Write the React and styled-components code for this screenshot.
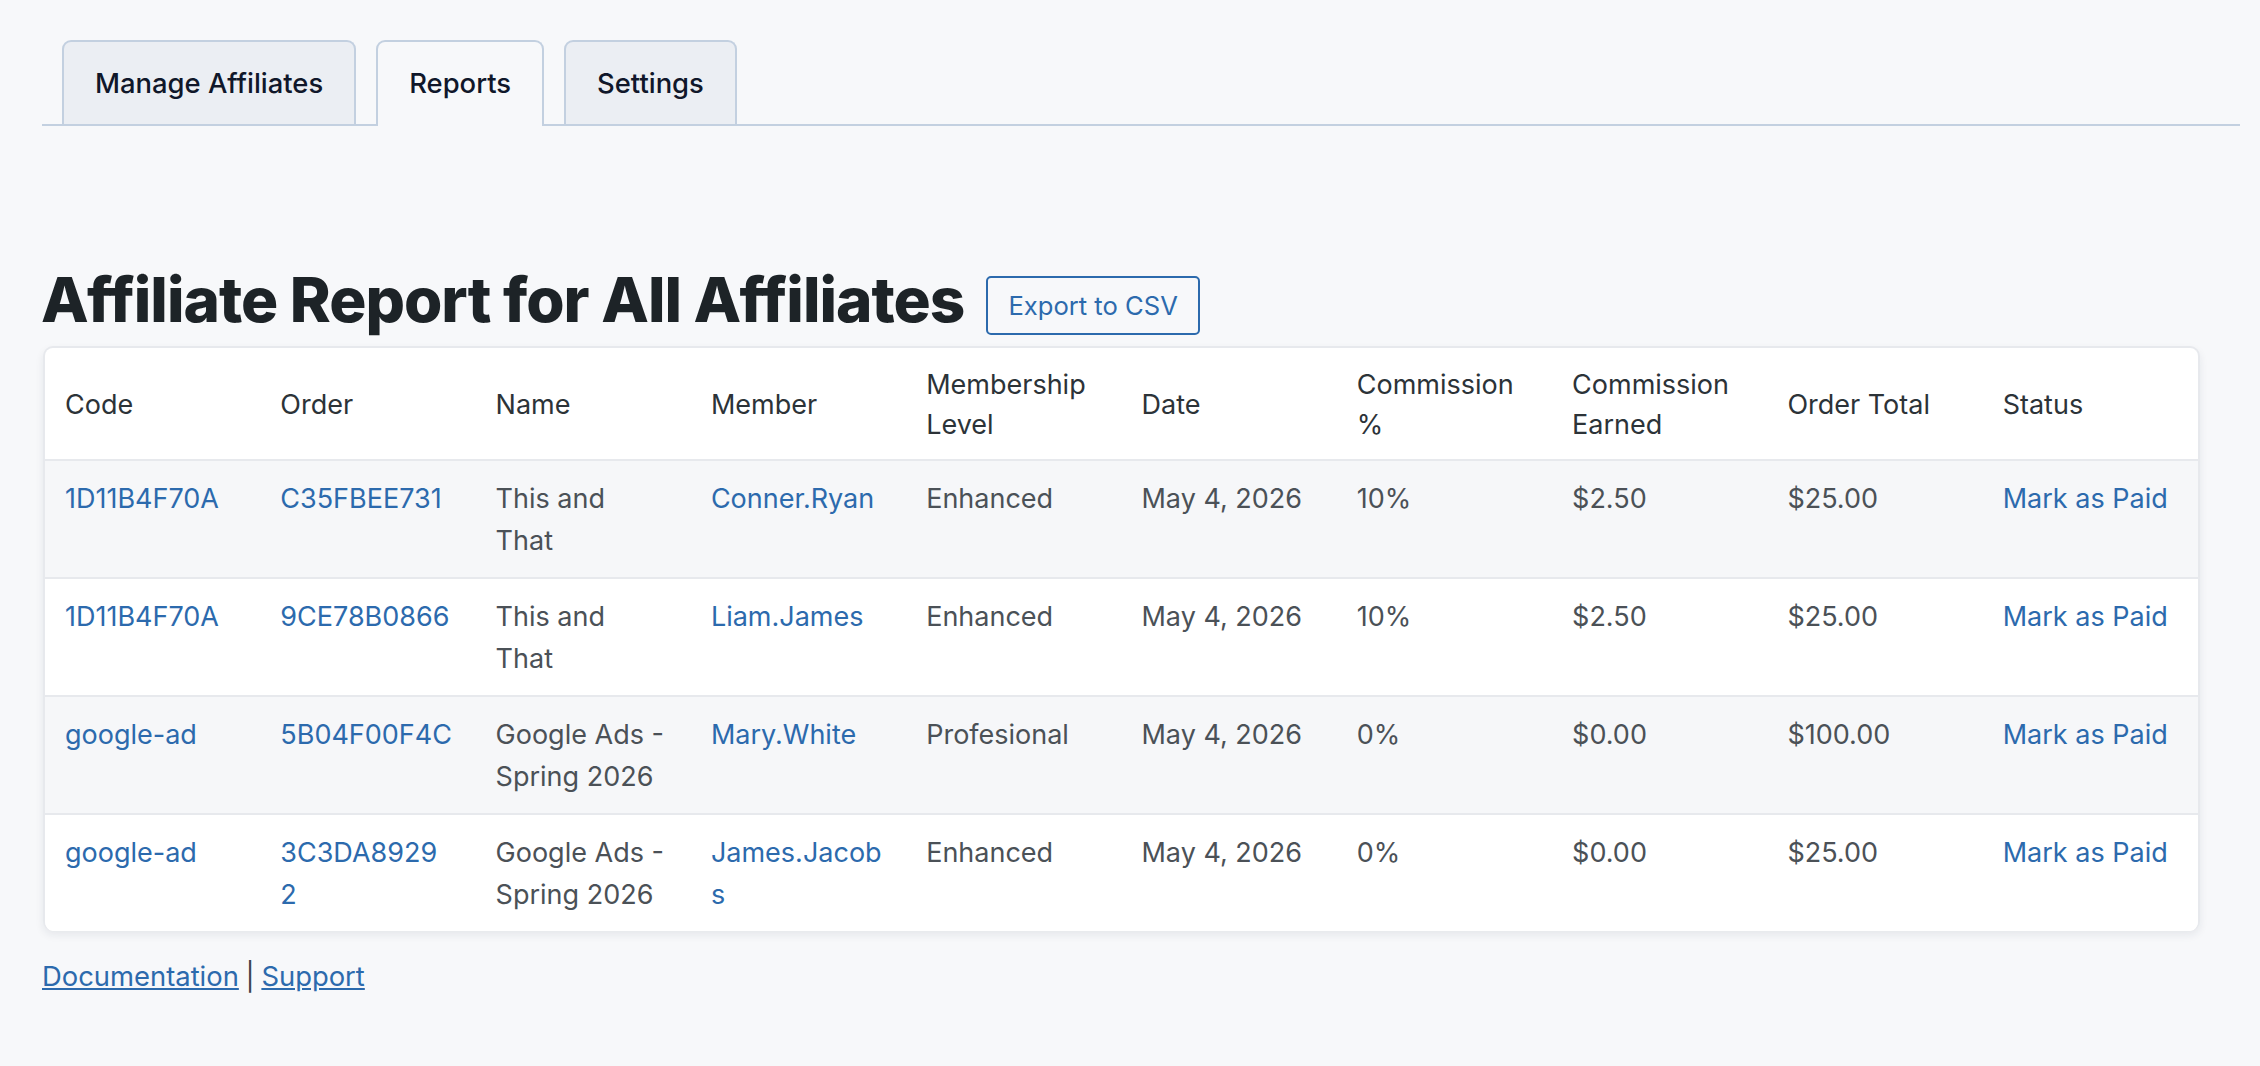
import React from "react"
import styled, { createGlobalStyle } from "styled-components"

const GlobalStyle = createGlobalStyle`
  html, body {
    margin: 0;
    padding: 0;
    background: #f7f8fa;
  }
  body {
    font-family: "Inter", "Liberation Sans", sans-serif;
    color: #3c434a;
    -webkit-font-smoothing: antialiased;
  }
`

const Page = styled.div`
  min-height: 1066px;
  box-sizing: border-box;
  padding: 40px 20px 0 42px;
  background: #f7f8fa;
`

const TabBar = styled.nav`
  display: flex;
  align-items: flex-start;
  gap: 20px;
  height: 86px;
  box-sizing: border-box;
  padding-left: 20px;
  border-bottom: 2px solid #c3d0e0;
`

const Tab = styled.a`
  display: flex;
  align-items: center;
  height: ${(p) => (p.$active ? "86px" : "84px")};
  box-sizing: border-box;
  padding: 0 31px ${(p) => (p.$active ? "2px" : "0")};
  border: 2px solid #c3d0e0;
  border-bottom: 0;
  border-radius: 9px 9px 0 0;
  background: ${(p) => (p.$active ? "#f7f8fa" : "#ebeef3")};
  color: #10172a;
  font-size: 27.4px;
  font-weight: 500;
`

const TitleRow = styled.div`
  display: flex;
  align-items: flex-end;
  gap: 22px;
  margin-top: 139px;
`

const Title = styled.h1`
  margin: 0 0 0 -1px;
  font-size: 62px;
  line-height: 70px;
  font-weight: 800;
  letter-spacing: -1px;
  color: #1d2327;
`

const ExportButton = styled.a`
  display: block;
  box-sizing: border-box;
  height: 59px;
  line-height: 55px;
  padding: 0 20px;
  border: 2px solid #2c6aad;
  border-radius: 5px;
  color: #2c6aad;
  font-size: 25.6px;
`

const Card = styled.div`
  width: 2157px;
  margin: 11px 0 0 1px;
  box-sizing: border-box;
  background: #fff;
  border: 2px solid #e7e9ed;
  border-bottom: 0;
  border-radius: 10px;
  box-shadow: 0 4px 8px rgba(30, 40, 60, 0.08);
  overflow: hidden;
`

const Table = styled.table`
  width: 100%;
  table-layout: fixed;
  border-collapse: collapse;
`

const HeadCell = styled.th`
  padding: 17px 22px 14px 20px;
  text-align: left;
  vertical-align: middle;
  font-size: 27px;
  font-weight: 400;
  line-height: 40px;
  color: #2c3338;
  overflow-wrap: break-word;
`

const Row = styled.tr`
  border-top: 2px solid #e7e9ed;
  background: ${(p) => (p.$striped ? "#f6f7f9" : "#fff")};
`

const Cell = styled.td`
  padding: 17px 22px 16px 20px;
  vertical-align: top;
  font-size: 27px;
  line-height: 41.5px;
  color: #4b5157;
  overflow-wrap: break-word;
`

const CellLink = styled.a`
  color: #2c6aad;
`

const Footer = styled.p`
  margin: 25px 0 0;
  font-size: 27.4px;
  line-height: 40px;
  word-spacing: -1px;
  color: #3c434a;
`

const FooterLink = styled.a`
  color: #2c6aad;
  text-decoration: underline;
`

const columns = [
  "Code",
  "Order",
  "Name",
  "Member",
  "Membership Level",
  "Date",
  "Commission %",
  "Commission Earned",
  "Order Total",
  "Status",
]

const rows = [
  ["1D11B4F70A", "C35FBEE731", "This and That", "Conner.Ryan", "Enhanced", "10%", "$2.50", "$25.00"],
  ["1D11B4F70A", "9CE78B0866", "This and That", "Liam.James", "Enhanced", "10%", "$2.50", "$25.00"],
  ["google-ad", "5B04F00F4C", "Google Ads - Spring 2026", "Mary.White", "Profesional", "0%", "$0.00", "$100.00"],
  ["google-ad", "3C3DA89292", "Google Ads - Spring 2026", "James.Jacobs", "Enhanced", "0%", "$0.00", "$25.00"],
]

const App = () => (
  <Page>
    <GlobalStyle />
    <TabBar>
      <Tab>Manage Affiliates</Tab>
      <Tab $active>Reports</Tab>
      <Tab>Settings</Tab>
    </TabBar>
    <TitleRow>
      <Title>Affiliate Report for All Affiliates</Title>
      <ExportButton>Export to CSV</ExportButton>
    </TitleRow>
    <Card>
      <Table>
        <thead>
          <tr>
            {columns.map((c) => (
              <HeadCell key={c}>{c}</HeadCell>
            ))}
          </tr>
        </thead>
        <tbody>
          {rows.map((r, i) => (
            <Row key={r[1]} $striped={i % 2 === 0}>
              <Cell><CellLink>{r[0]}</CellLink></Cell>
              <Cell><CellLink>{r[1]}</CellLink></Cell>
              <Cell>{r[2]}</Cell>
              <Cell><CellLink>{r[3]}</CellLink></Cell>
              <Cell>{r[4]}</Cell>
              <Cell>May 4, 2026</Cell>
              <Cell>{r[5]}</Cell>
              <Cell>{r[6]}</Cell>
              <Cell>{r[7]}</Cell>
              <Cell><CellLink>Mark as Paid</CellLink></Cell>
            </Row>
          ))}
        </tbody>
      </Table>
    </Card>
    <Footer>
      <FooterLink>Documentation</FooterLink> | <FooterLink>Support</FooterLink>
    </Footer>
  </Page>
)

export default App
